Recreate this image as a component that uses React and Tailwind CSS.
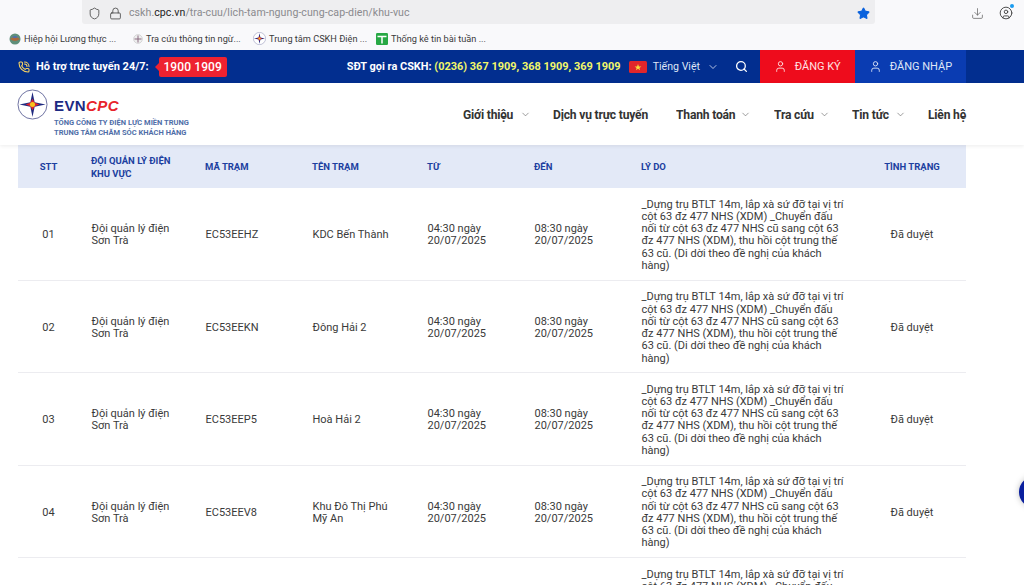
import React from "react";
import { Shield, Lock, Star, Download, CircleUser, PhoneCall, Search, User, ChevronDown } from "lucide-react";

const REASON = "_Dựng trụ BTLT 14m, lắp xà sứ đỡ tại vị trí cột 63 đz 477 NHS (XDM) _Chuyển đấu nối từ cột 63 đz 477 NHS cũ sang cột 63 đz 477 NHS (XDM), thu hồi cột trung thế 63 cũ. (Di dời theo đề nghị của khách hàng)";

const rows = [
  ["01", "EC53EEHZ", "KDC Bến Thành"],
  ["02", "EC53EEKN", "Đông Hải 2"],
  ["03", "EC53EEP5", "Hoà Hải 2"],
  ["04", "EC53EEV8", "Khu Đô Thị Phú Mỹ An"],
  ["05", "EC53EEX2", "Hoà Hải 2"],
];

function LogoMark({ size = 32 }) {
  return (
    <svg width={size} height={size} viewBox="0 0 32 32" className="shrink-0">
      <circle cx="16" cy="16" r="15" fill="#fff" stroke="#5b5f95" strokeWidth="0.9" />
      <path d="M16 3 L18.2 13.8 L16 16 L13.8 13.8 Z" fill="#1f2a80" />
      <path d="M16 29 L18.2 18.2 L16 16 L13.8 18.2 Z" fill="#1f2a80" />
      <path d="M2.5 16 L13.8 13.8 L16 16 L13.8 18.2 Z" fill="#1f2a80" />
      <path d="M29.5 16 L18.2 13.8 L16 16 L18.2 18.2 Z" fill="#1f2a80" />
      <path d="M16 10 L18 14 L23 16 L18 18 L16 22 L14 18 L9 16 L14 14 Z" fill="#e2232b" />
      <circle cx="16" cy="16" r="2.6" fill="#f7c51e" />
    </svg>
  );
}

function Bookmark({ icon, label, w }) {
  return (
    <div className={`flex items-center gap-[3px] ${w}`}>
      {icon}
      <span className="text-[9.2px] text-[#3b3b3b] whitespace-nowrap">{label}</span>
    </div>
  );
}

function NavItem({ label, caret, w }) {
  return (
    <div className={`flex items-center ${w}`}>
      <span className="text-[13px] font-bold text-[#333] tracking-[-0.2px] whitespace-nowrap origin-left scale-x-[0.93] inline-block">{label}</span>
      {caret && <ChevronDown size={11} strokeWidth={1.4} className="text-[#666] ml-auto" />}
    </div>
  );
}

const th = "font-bold text-[9.5px] leading-[12.5px] text-[#1c3fa0] text-left px-[12px] pt-[2px] align-middle";
const td = "pl-[12.5px] pr-[12px] pt-[3px] align-middle";

export default function App() {
  return (
    <div className="relative w-[1024px] h-[585px] overflow-hidden bg-white font-['Roboto',sans-serif]">
      {/* Browser toolbar */}
      <div className="h-[24px] bg-[#f9f9fb] flex items-center">
        <div className="ml-[82px] w-[793px] h-[24px] pt-[2px] bg-[#eeeef0] rounded-b-[3px] flex items-center">
          <Shield size={13} strokeWidth={1.5} className="ml-[6px] text-[#444]" />
          <Lock size={13} strokeWidth={1.5} className="ml-[8px] text-[#444]" />
          <span className="ml-[7px] text-[10.6px] tracking-[0.05px] text-[#8a8a8e] whitespace-nowrap">
            cskh.<span className="text-[#222]">cpc.vn</span>/tra-cuu/lich-tam-ngung-cung-cap-dien/khu-vuc
          </span>
          <Star size={13} className="ml-auto mr-[5px] text-[#0b62dd]" fill="#0b62dd" />
        </div>
        <Download size={13} strokeWidth={1.4} className="ml-[96px] mt-[2px] text-[#666]" />
        <div className="relative ml-[15px] mt-[2px]">
          <CircleUser size={14} strokeWidth={1.6} className="text-[#444]" />
          <div className="absolute -right-[1px] -top-[2px] w-[4px] h-[4px] rounded-full bg-[#1a9cf0]" />
        </div>
      </div>

      {/* Bookmarks */}
      <div className="h-[26px] pt-[4px] bg-[#f9f9fb] flex items-center pl-[9px]">
        <Bookmark
          w="w-[124px]"
          label="Hiệp hội Lương thực ..."
          icon={
            <svg width="12" height="12" viewBox="0 0 12 12">
              <circle cx="6" cy="6" r="5.5" fill="#5f8f7a" />
              <path d="M1 6 Q6 2 11 6 Q6 10 1 6Z" fill="#a9693e" />
              <path d="M3 4 Q6 2 9 4 Q6 6 3 4Z" fill="#4f6fb0" />
            </svg>
          }
        />
        <Bookmark
          w="w-[120px]"
          label="Tra cứu thông tin ngừ..."
          icon={
            <svg width="10" height="10" viewBox="0 0 10 10">
              <circle cx="5" cy="5" r="4.4" fill="#eee" stroke="#bbb" strokeWidth="0.5" />
              <path d="M5 1.5V8.5M1.5 5H8.5" stroke="#8a6a80" strokeWidth="1" />
            </svg>
          }
        />
        <Bookmark w="w-[123px]" label="Trung tâm CSKH Điện ..." icon={<LogoMark size={13} />} />
        <Bookmark
          w="w-[130px]"
          label="Thống kê tin bài tuần ..."
          icon={
            <svg width="12" height="12" viewBox="0 0 12 12">
              <rect width="12" height="12" rx="1.2" fill="#27a844" />
              <path d="M1.5 3.5H10.5M6 3.5V10.5" stroke="#fff" strokeWidth="1.5" />
            </svg>
          }
        />
      </div>

      {/* Blue bar */}
      <div className="h-[33px] bg-[#022e8f] flex items-center">
        <PhoneCall size={12} strokeWidth={2.2} className="ml-[18px] text-[#f5d061]" />
        <span className="ml-[6px] mt-[2px] text-[11px] font-bold text-white whitespace-nowrap">Hỗ trợ trực tuyến 24/7:</span>
        <div className="relative ml-[10px] h-[20px] w-[68px] bg-[#ee2230] rounded-[2px] flex items-center justify-center">
          <div className="absolute -left-[4px] top-[6px] w-0 h-0 border-y-[4px] border-y-transparent border-r-[4px] border-r-[#ee2230]" />
          <span className="text-[12px] font-medium text-white tracking-[0.1px]">1900 1909</span>
        </div>
        <span className="ml-[120px] mt-[2px] w-[274px] text-[10.95px] font-bold text-white whitespace-nowrap">
          SĐT gọi ra CSKH: <span className="text-[#f2f76a]">(0236) 367 1909, 368 1909, 369 1909</span>
        </span>
        <svg width="18" height="12" viewBox="0 0 18 12" className="ml-[8px] shrink-0">
          <rect width="18" height="12" rx="1.5" fill="#e0262b" />
          <path d="M9 3 L9.9 5.4 L12.4 5.4 L10.4 6.9 L11.1 9.2 L9 7.8 L6.9 9.2 L7.6 6.9 L5.6 5.4 L8.1 5.4 Z" fill="#f7dc3c" />
        </svg>
        <span className="ml-[6px] w-[48px] text-[10.6px] text-[#dfe6f6] whitespace-nowrap">Tiếng Việt</span>
        <ChevronDown size={12} strokeWidth={1.6} className="ml-[6px] text-[#dfe6f6]" />
        <Search size={13} strokeWidth={2.4} className="ml-[16px] text-white" />
        <div className="ml-[12px] w-[95px] h-full bg-[#ee0c1c] flex items-center pl-[14px] gap-[8px]">
          <User size={13} strokeWidth={1.7} className="text-[#ffe2e2]" />
          <span className="mt-[2px] text-[11px] text-[#ffe2e2] whitespace-nowrap">ĐĂNG KÝ</span>
        </div>
        <div className="w-[111px] h-full bg-[#0a3cb2] flex items-center pl-[14px] gap-[8px]">
          <User size={13} strokeWidth={1.7} className="text-[#dfe6f6]" />
          <span className="mt-[2px] text-[11px] text-[#dfe6f6] whitespace-nowrap">ĐĂNG NHẬP</span>
        </div>
      </div>

      {/* Site header */}
      <div className="relative z-10 h-[62px] bg-white shadow-[0_1px_4px_rgba(0,0,0,0.08)] flex items-start">
        <div className="ml-[17px] mt-[6px] flex items-start">
          <LogoMark size={31} />
          <div className="ml-[6px] mt-[9px]">
            <div className="text-[15px] leading-[15px] font-black tracking-[0.4px] whitespace-nowrap font-['Liberation_Sans',sans-serif]">
              <span className="text-[#1d2a83]">EVN</span>
              <span className="text-[#e8232b] italic">CPC</span>
            </div>
            <div className="mt-[5px] text-[7.5px] leading-[10px] font-bold text-[#4f6ea8] whitespace-nowrap">
              TỔNG CÔNG TY ĐIỆN LỰC MIỀN TRUNG
              <br />
              TRUNG TÂM CHĂM SÓC KHÁCH HÀNG
            </div>
          </div>
        </div>
        <nav className="ml-auto mr-[58px] mt-[22px] flex items-center">
          <NavItem label="Giới thiệu" caret w="w-[68px]" />
          <div className="w-[22px]" />
          <NavItem label="Dịch vụ trực tuyến" w="w-[123px]" />
          <NavItem label="Thanh toán" caret w="w-[75px]" />
          <div className="w-[23px]" />
          <NavItem label="Tra cứu" caret w="w-[56px]" />
          <div className="w-[22px]" />
          <NavItem label="Tin tức" caret w="w-[54px]" />
          <div className="w-[22px]" />
          <NavItem label="Liên hệ" w="w-[38px]" />
        </nav>
      </div>

      {/* Table */}
      <div className="pl-[18px]">
        <table className="w-[948px] table-fixed border-collapse">
          <colgroup>
            <col className="w-[61px]" />
            <col className="w-[114px]" />
            <col className="w-[107px]" />
            <col className="w-[115px]" />
            <col className="w-[107px]" />
            <col className="w-[107px]" />
            <col className="w-[229px]" />
            <col className="w-[108px]" />
          </colgroup>
          <thead>
            <tr className="h-[43px] bg-[#e3e9f7]">
              <th className={`${th} !text-center`}>STT</th>
              <th className={th}>ĐỘI QUẢN LÝ ĐIỆN KHU VỰC</th>
              <th className={th}>MÃ TRẠM</th>
              <th className={th}>TÊN TRẠM</th>
              <th className={th}>TỪ</th>
              <th className={th}>ĐẾN</th>
              <th className={th}>LÝ DO</th>
              <th className={`${th} !text-center`}>TÌNH TRẠNG</th>
            </tr>
          </thead>
          <tbody className="text-[11px] leading-[12.25px] text-[#3a3a3a]">
            {rows.map((r) => (
              <tr key={r[0]} className="h-[92.4px] border-b border-[#ececf0]">
                <td className="pt-[3px] text-center align-middle">{r[0]}</td>
                <td className={td}>Đội quản lý điện Sơn Trà</td>
                <td className={td}>{r[1]}</td>
                <td className={td}>{r[2]}</td>
                <td className={td}>04:30 ngày 20/07/2025</td>
                <td className={td}>08:30 ngày 20/07/2025</td>
                <td className={td}>{REASON}</td>
                <td className="pt-[3px] text-center align-middle">Đã duyệt</td>
              </tr>
            ))}
          </tbody>
        </table>
      </div>

      {/* Floating button */}
      <div className="absolute left-[1019px] top-[476px] w-[32px] h-[32px] rounded-full bg-[#0a1f9e] shadow-[0_0_6px_rgba(0,0,0,0.25)]" />
    </div>
  );
}
